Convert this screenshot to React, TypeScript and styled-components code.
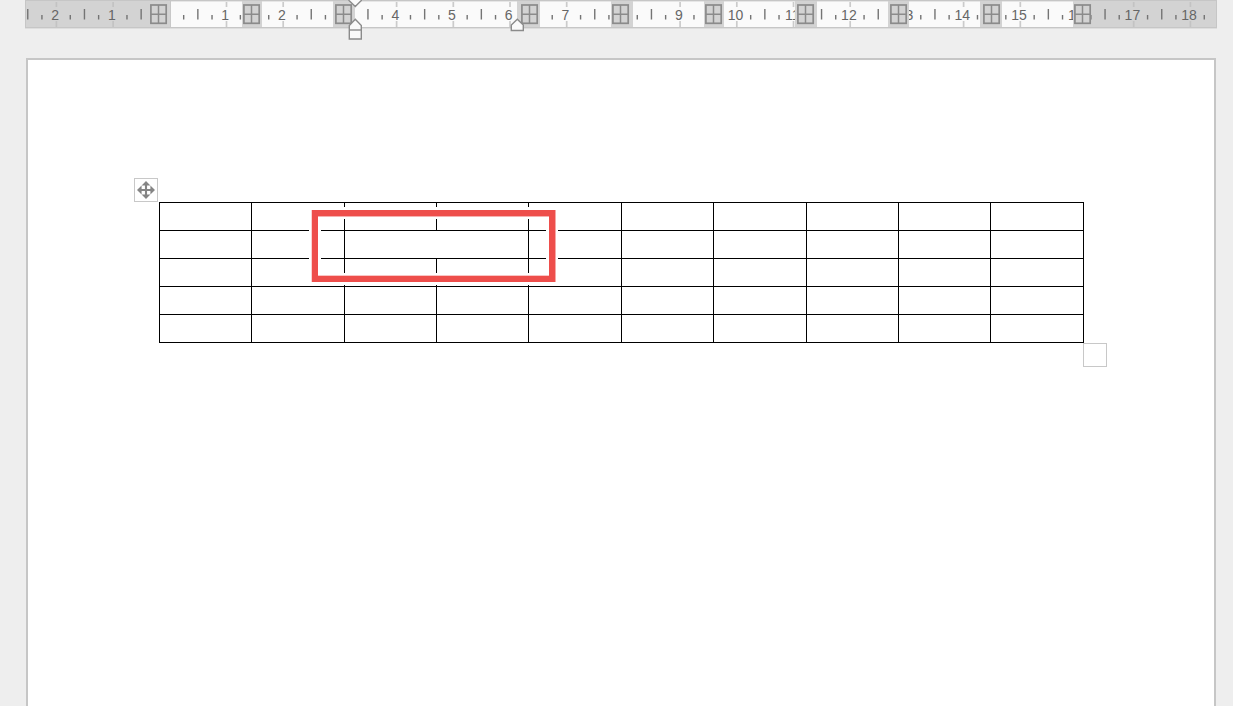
import React from "react";
import styled, { createGlobalStyle } from "styled-components";

const GlobalStyle = createGlobalStyle`
  * {
    box-sizing: border-box;
  }
  body {
    margin: 0;
    background: #eeeeee;
    font-family: "Liberation Sans", Arial, sans-serif;
    overflow: hidden;
  }
`;

const Workspace = styled.div`
  display: flex;
  flex-direction: column;
  height: 100vh;
  overflow: hidden;
  background: #eeeeee;
`;

const RulerBar = styled.header`
  flex: none;
  height: 58px;
`;

const RulerSvg = styled.svg`
  display: block;
`;

const RulerLabel = styled.text`
  font-family: "Liberation Sans", Arial, sans-serif;
  font-size: 14px;
  fill: #666666;
  text-anchor: middle;
`;

const Page = styled.main`
  flex: 1;
  width: 1190px;
  margin-left: 26px;
  padding: 142px 0 0 131px;
  background: #ffffff;
  border: 2px solid #c6c6c6;
  border-bottom: none;
`;

const TableWrap = styled.div`
  position: relative;
  width: 925px;
`;

const Table = styled.div`
  display: grid;
  grid-template-columns: 92px 93px 92px 92px 93px 92px 93px 92px 92px 93px;
  grid-auto-rows: 28px;
  border-left: 1px solid #000000;
  border-top: 1px solid #000000;
`;

const Cell = styled.div<{ $span?: number }>`
  grid-column: span ${({ $span }) => $span ?? 1};
  border-right: 1px solid #000000;
  border-bottom: 1px solid #000000;
`;

const Handle = styled.div`
  position: absolute;
  display: flex;
  align-items: center;
  justify-content: center;
  width: 24px;
  height: 24px;
  background: #ffffff;
  border: 1px solid #c8c8c8;
`;

const MoveHandle = styled(Handle)`
  left: -25px;
  top: -24px;
`;

const ResizeHandle = styled(Handle)`
  left: 924px;
  top: 141px;
`;

const Highlight = styled.div`
  position: absolute;
  left: 153px;
  top: 8px;
  width: 243px;
  height: 72px;
  border: 6px solid #ee4e4b;
  box-shadow:
    -1px 0 0 #fbd3d2,
    1px 0 0 #f6a9a7,
    inset 0 1px 0 #f7b0af,
    inset 0 -1px 0 #fac5c4,
    0 0 0 3px #ffffff,
    inset 0 0 0 3px #ffffff;
`;

const ZERO = 169.9;
const CM = 56.7;

const columnStops = [150, 243, 335, 521, 612, 705, 797, 890, 983, 1074];

const textAreas = [
  [171, 242],
  [262, 333],
  [355, 517],
  [540, 611],
  [633, 704],
  [724, 795],
  [817, 888],
  [909, 980],
  [1002, 1073],
];

// parts of the scale that the column markers hide
const covers = [
  [242, 262],
  [333, 355],
  [517, 540],
  [611, 633],
  [704, 724],
  [795, 817],
  [888, 909],
  [980, 1002],
  [1073, 1091],
];

const quarters = Array.from({ length: 84 }, (_, i) => i - 10);

function ScaleMark({ quarter }: { quarter: number }) {
  const x = ZERO + (quarter * CM) / 4;
  if (quarter === 0) return null;
  if (quarter % 4 === 0) {
    const inMargin = x < 170 || x > 1091;
    return (
      <g>
        <path
          d={`M${x - 0.1} 2v5M${x - 0.1} 21v6`}
          stroke={inMargin ? "#c3c3c3" : "#cbcbcb"}
          strokeWidth={1.7}
        />
        <RulerLabel x={x - 1.4} y={20}>
          {Math.abs(quarter / 4)}
        </RulerLabel>
      </g>
    );
  }
  const top = quarter % 2 === 0 ? 9 : 15;
  return (
    <rect x={x - 1.1} y={top} width={1.4} height={19.5 - top} fill="#747474" />
  );
}

function ColumnMarker({ x }: { x: number }) {
  return (
    <g stroke="#8b8b8b" fill="#d3d3d3">
      <rect x={x + 0.9} y={5} width={15.3} height={18.3} strokeWidth={1.7} />
      <path d={`M${x + 8.5} 5v18M${x + 1} 14.3h15.2`} strokeWidth={1.5} />
    </g>
  );
}

function Ruler() {
  return (
    <RulerBar>
      <RulerSvg width={1233} height={58}>
        <rect x={25} y={0} width={1192} height={28.4} fill="#c6c6c6" />
        <rect x={26} y={1} width={1190} height={26} fill="#d3d3d3" />
        {textAreas.map(([from, to]) => (
          <rect
            key={from}
            x={from}
            y={1.5}
            width={to - from}
            height={25.5}
            fill="#fafafa"
          />
        ))}
        {quarters.map((q) => (
          <ScaleMark key={q} quarter={q} />
        ))}
        {covers.map(([from, to]) => (
          <rect
            key={from}
            x={from}
            y={1}
            width={to - from}
            height={26}
            fill="#d3d3d3"
          />
        ))}
        <rect x={170} y={1} width={1} height={26} fill="#c8c8c8" />
        {columnStops.map((x) => (
          <ColumnMarker key={x} x={x} />
        ))}
        <g fill="#fafafa" stroke="#8b8b8b" strokeWidth={1.4}>
          <path d="M349 -3V0.5L355.3 6.5L361.3 0.5V-3Z" />
          <path d="M349.3 39V25.5L355.3 19.3L361.3 25.5V39Z" />
          <path d="M349.3 30H361.3" />
          <path d="M511.3 30.5V25L517.3 19.3L523.3 25V30.5Z" />
        </g>
      </RulerSvg>
    </RulerBar>
  );
}

function MoveIcon() {
  return (
    <svg width={18} height={18} viewBox="0 0 18 18">
      <path d="M9 3V15M3 9H15" stroke="#858585" strokeWidth={2.1} />
      <path
        d="M9 0L13.4 4.6H4.6ZM9 18L13.4 13.4H4.6ZM0 9L4.6 4.6V13.4ZM18 9L13.4 4.6V13.4Z"
        fill="#858585"
      />
    </svg>
  );
}

const rows = [10, 9, 10, 10, 10];

function App() {
  return (
    <Workspace>
      <GlobalStyle />
      <Ruler />
      <Page>
        <TableWrap>
          <Table>
            {rows.map((count, r) =>
              Array.from({ length: count }, (_, c) => (
                <Cell key={`${r}-${c}`} $span={count === 9 && c === 2 ? 2 : 1} />
              ))
            )}
          </Table>
          <MoveHandle>
            <MoveIcon />
          </MoveHandle>
          <ResizeHandle />
          <Highlight />
        </TableWrap>
      </Page>
    </Workspace>
  );
}

export default App;
